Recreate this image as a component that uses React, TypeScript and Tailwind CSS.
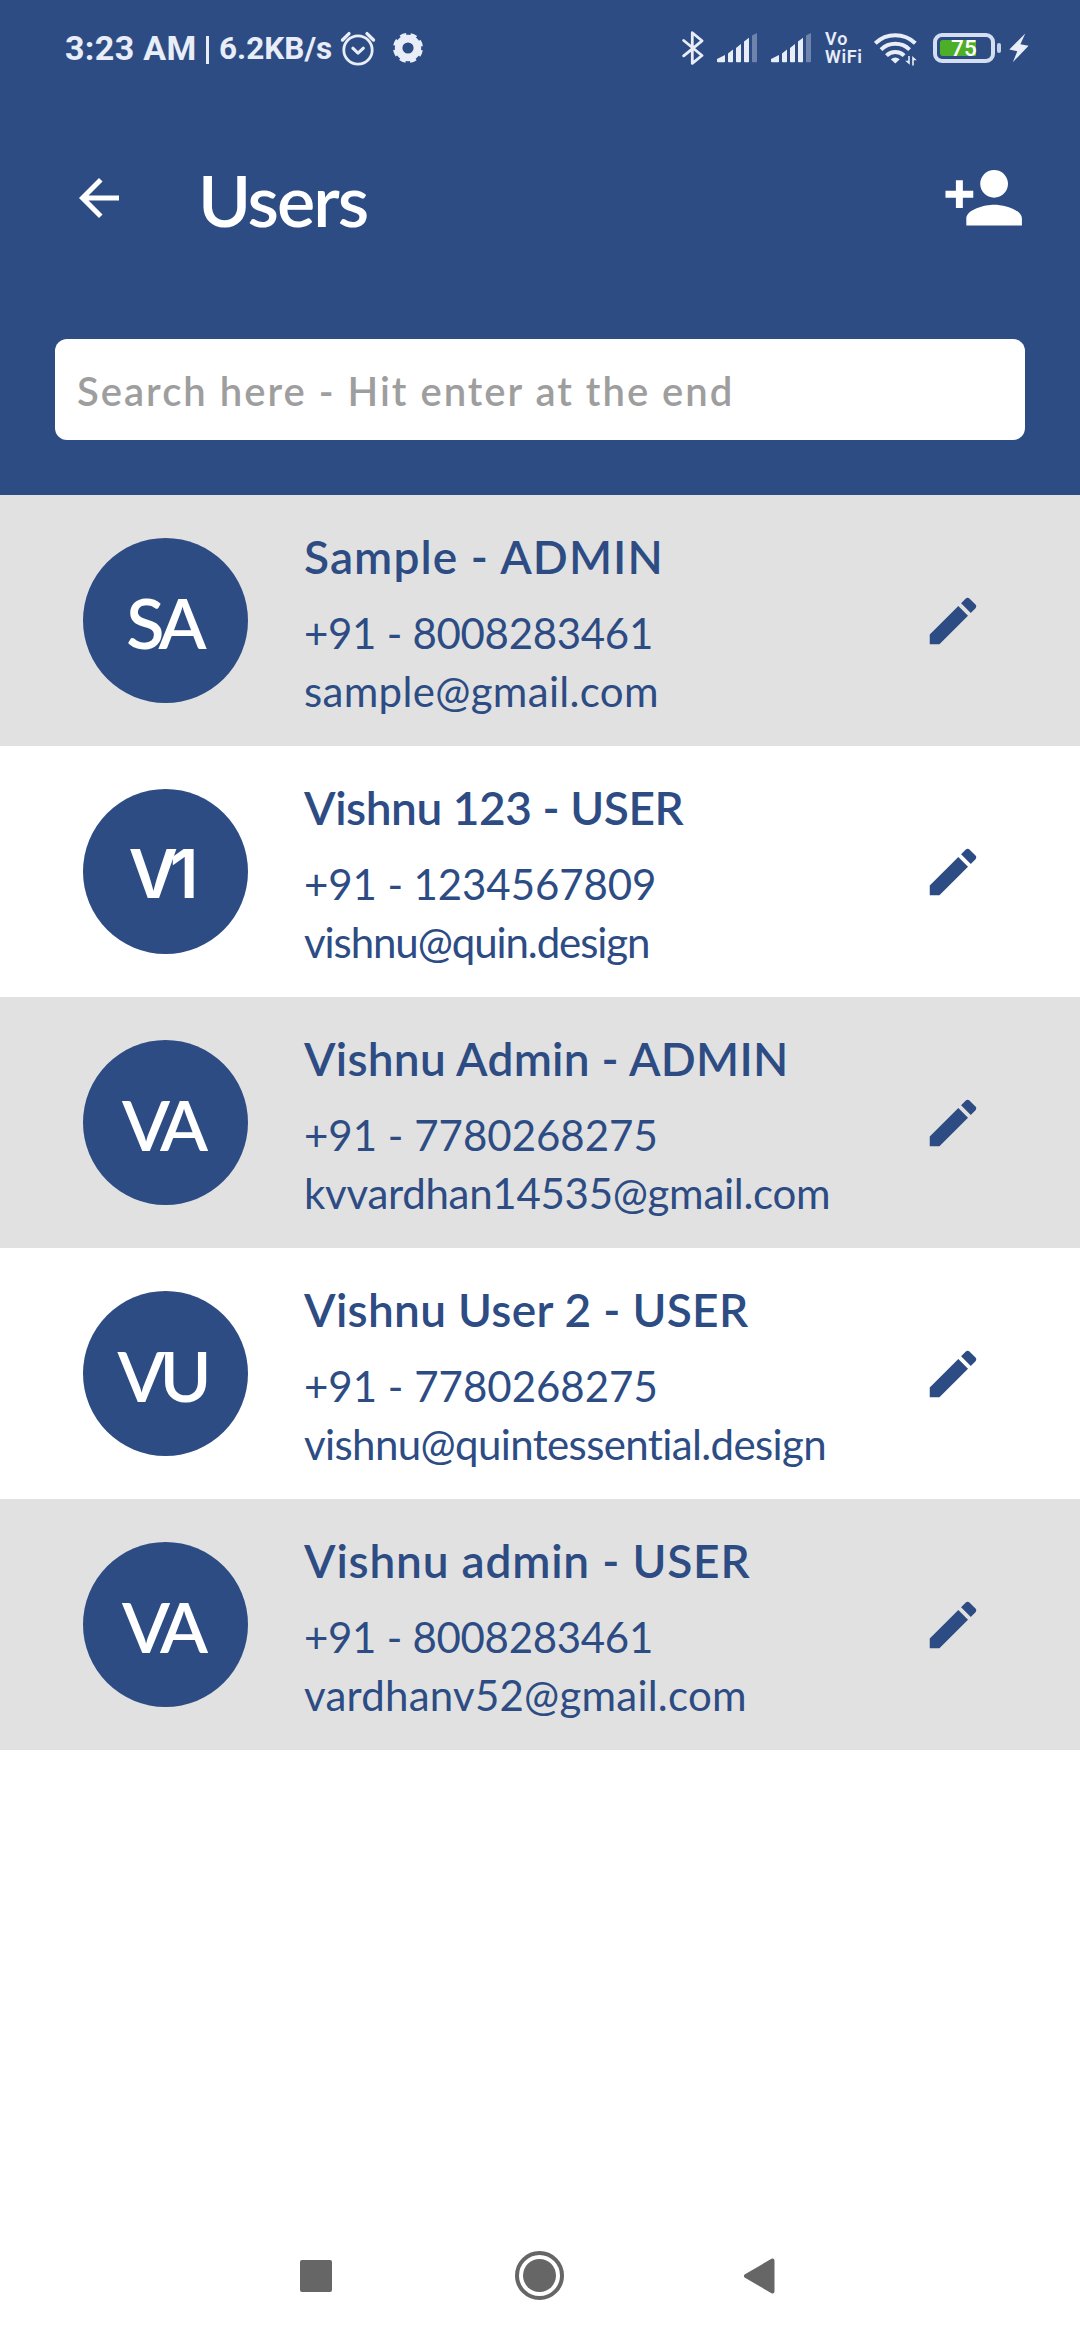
type User = {
  initials: string;
  initialsClass: string;
  name: string;
  nameClass: string;
  phone: string;
  phoneClass: string;
  email: string;
  emailClass: string;
};

const users: User[] = [
  {
    initials: "SA",
    initialsClass: "tracking-[-5px] mr-[3px]",
    name: "Sample - ADMIN",
    nameClass: "tracking-[1.11px]",
    phone: "+91 - 8008283461",
    phoneClass: "tracking-[-0.3px]",
    email: "sample@gmail.com",
    emailClass: "tracking-[0.33px]",
  },
  {
    initials: "V1",
    initialsClass: "font-['Inter',sans-serif] text-[68px] tracking-[-8px] mr-[12px]",
    name: "Vishnu 123 - USER",
    nameClass: "tracking-[-0.44px]",
    phone: "+91 - 1234567809",
    phoneClass: "tracking-[-0.1px]",
    email: "vishnu@quin.design",
    emailClass: "tracking-[-1.09px]",
  },
  {
    initials: "VA",
    initialsClass: "tracking-[-6px] mr-[7px]",
    name: "Vishnu Admin - ADMIN",
    nameClass: "tracking-[0.25px]",
    phone: "+91 - 7780268275",
    phoneClass: "tracking-normal",
    email: "kvvardhan14535@gmail.com",
    emailClass: "tracking-[-0.28px]",
  },
  {
    initials: "VU",
    initialsClass: "tracking-[-6px] mr-[8px]",
    name: "Vishnu User 2 - USER",
    nameClass: "tracking-[0.3px]",
    phone: "+91 - 7780268275",
    phoneClass: "tracking-normal",
    email: "vishnu@quintessential.design",
    emailClass: "tracking-[-0.62px]",
  },
  {
    initials: "VA",
    initialsClass: "tracking-[-6px] mr-[7px]",
    name: "Vishnu admin - USER",
    nameClass: "tracking-[0.8px]",
    phone: "+91 - 8008283461",
    phoneClass: "tracking-[-0.3px]",
    email: "vardhanv52@gmail.com",
    emailClass: "tracking-[0.23px]",
  },
];

function Alarm() {
  return (
    <svg viewBox="0 0 36 36" className="h-9 w-9 shrink-0" fill="none" stroke="currentColor" strokeLinecap="round" strokeLinejoin="round">
      <circle cx="18" cy="20" r="14.2" strokeWidth="2.8" />
      <path d="M2.5 10 9 3.6M33.5 10 27 3.6" strokeWidth="3.4" />
      <path d="M12.8 18.2l5.2 5 5.4-5" strokeWidth="3" />
    </svg>
  );
}

function Gear() {
  return (
    <svg viewBox="0 0 30 30" className="h-[30px] w-[30px] shrink-0">
      <g fill="none" stroke="currentColor">
        <circle cx="15" cy="15" r="9.4" strokeWidth="7.6" />
        <circle cx="15" cy="15" r="13.5" strokeWidth="3" strokeDasharray="6.2 4.403" strokeDashoffset="-2.2" />
      </g>
    </svg>
  );
}

function Bluetooth() {
  return (
    <svg viewBox="0 0 22 34" className="h-[34px] w-[22px] shrink-0" fill="none" stroke="currentColor" strokeWidth="2.8" strokeLinecap="round" strokeLinejoin="round">
      <path d="M1.7 9.5 20 24.5 10.3 32.3V1.7L20 9.8 1.7 24.8" />
    </svg>
  );
}

function Signal() {
  return (
    <svg viewBox="0 0 41 30" className="h-[30px] w-[41px] shrink-0" fill="currentColor">
      <path d="M0 26 8 22v6.8Q8 29.2 7 29.2H1Q0 29.2 0 28.2Z" />
      <path d="M11 20.5 16 16.5v12q0 .8-.8.8h-3.4q-.8 0-.8-.8Z" />
      <path d="M19 15 24 11v17.5q0 .8-.8.8h-3.4q-.8 0-.8-.8Z" />
      <path d="M27 8.5 32 4.8v23.7q0 .8-.8.8h-3.4q-.8 0-.8-.8Z" />
      <path d="M35 2.5 40 0v28.5q0 .8-.8.8h-3.4q-.8 0-.8-.8Z" opacity="0.35" />
    </svg>
  );
}

function Wifi() {
  return (
    <svg viewBox="0 0 44 33" className="h-[33px] w-[44px] shrink-0" fill="none" stroke="currentColor">
      <path d="M1.3 10.3a29 29 0 0 1 40 0" strokeWidth="4" />
      <path d="M7 16.6a20.5 20.5 0 0 1 28.6 0" strokeWidth="4" />
      <path d="M12.5 22.6a12.5 12.5 0 0 1 17.6 0" strokeWidth="4" />
      <path d="M16.8 26.2q4.5-3.4 9 0l-4.5 4.2z" fill="currentColor" stroke="none" />
      <path d="M35.8 23v8.8l-4.6-4h3v-4.8zM38.2 32.5V23l4.6 4.3h-3v5.2z" fill="currentColor" stroke="none" />
    </svg>
  );
}

function Battery() {
  return (
    <div className="flex shrink-0 items-center">
      <div className="flex h-[30px] w-[62px] items-center rounded-[9px] border-4 border-[#d5ddf0] pl-[3px]">
        <div className="flex h-4 w-9 items-center rounded-l-[3px] bg-[#4caf27] pl-[11px]">
          <span className="text-[22.5px] leading-none font-medium tracking-[0.3px] text-white">75</span>
        </div>
      </div>
      <div className="ml-[2px] h-[10px] w-1 rounded-[2px] bg-[#c6d0e6]" />
    </div>
  );
}

function StatusBar() {
  return (
    <div className="flex h-24 items-center pl-[65px] font-['Roboto',sans-serif] text-[#e8edf7]">
      <span className="w-[141px] shrink-0 text-[34px] leading-[40px] font-bold tracking-[0.35px] whitespace-nowrap">3:23 AM</span>
      <span className="mt-[3px] h-7 w-[3px] shrink-0 bg-current" />
      <span className="mt-[1px] ml-[10px] w-[121px] shrink-0 text-[31.5px] leading-[40px] font-bold whitespace-nowrap">6.2KB/s</span>
      <Alarm />
      <div className="ml-[17px] flex">
        <Gear />
      </div>
      <div className="ml-[259px] flex items-center">
        <Bluetooth />
        <div className="ml-[13px] flex gap-[13px]">
          <Signal />
          <Signal />
        </div>
        <div className="ml-[13px] flex w-[49px] flex-col text-[18px] leading-[18px] font-semibold">
          <span className="tracking-[1px]">Vo</span>
          <span className="tracking-[0.6px]">WiFi</span>
        </div>
        <div className="mt-[2px] flex">
          <Wifi />
        </div>
        <div className="ml-[15px] flex">
          <Battery />
        </div>
        <svg viewBox="0 0 20 30" className="ml-[8px] h-[30px] w-5 shrink-0" fill="currentColor">
          <path d="M16.3.5.3 16.5 8.3 18.2 3.8 29.3 19.6 12.8 11.4 11.2z" />
        </svg>
      </div>
    </div>
  );
}

function Header() {
  return (
    <header className="flex h-[495px] flex-col bg-[#2d4c84]">
      <StatusBar />
      <div className="flex h-[204px] items-center pl-[69px] text-white">
        <svg viewBox="0 0 24 24" className="h-[60px] w-[60px] shrink-0" fill="currentColor">
          <path d="M20 11H7.83l5.59-5.59L12 4l-8 8 8 8 1.41-1.41L7.83 13H20v-2z" />
        </svg>
        <h1 className="mt-[2px] ml-[69px] text-[72px] leading-[88px] font-semibold tracking-[-2px]">Users</h1>
        <svg viewBox="0 0 24 24" className="mr-[55px] ml-auto h-[83.4px] w-[83.4px] shrink-0" fill="currentColor">
          <path d="M15 12c2.21 0 4-1.79 4-4s-1.79-4-4-4-4 1.79-4 4 1.79 4 4 4zm-9-2V7H4v3H1v2h3v3h2v-3h3v-2H6zm9 4c-2.67 0-8 1.34-8 4v2h16v-2c0-2.66-5.33-4-8-4z" />
        </svg>
      </div>
      <div className="mx-[55px] mt-[39px] flex h-[101px] items-center rounded-xl bg-white pl-[22px]">
        <span className="mt-[3px] text-[40px] leading-[48px] font-semibold tracking-[2px] whitespace-nowrap text-[#9e9e9e]">
          Search here - Hit enter at the end
        </span>
      </div>
    </header>
  );
}

function UserRow({ user }: { user: User }) {
  return (
    <li className="flex h-[251px] pl-[83px] text-[#2d4c84] odd:bg-[#e1e1e1]">
      <div className="flex h-[165px] w-[165px] shrink-0 items-center justify-center self-center rounded-full bg-[#2d4c84] pt-[2px] text-[70px] leading-none font-semibold text-white">
        <span className={user.initialsClass}>{user.initials}</span>
      </div>
      <div className="ml-14 flex flex-col pt-[34px] whitespace-nowrap">
        <span className={`text-[46px] leading-[56px] font-semibold ${user.nameClass}`}>{user.name}</span>
        <span className={`mt-[19px] text-[42px] leading-[58px] ${user.phoneClass}`}>{user.phone}</span>
        <span className={`text-[42px] leading-[58px] ${user.emailClass}`}>{user.email}</span>
      </div>
      <svg viewBox="0 0 24 24" className="mr-24 ml-auto h-[62px] w-[62px] shrink-0 self-center" fill="currentColor">
        <path d="M3 17.25V21h3.75L17.81 9.94l-3.75-3.75L3 17.25zM20.71 7.04c.39-.39.39-1.02 0-1.41l-2.34-2.34c-.39-.39-1.02-.39-1.41 0l-1.83 1.83 3.75 3.75 1.83-1.83z" />
      </svg>
    </li>
  );
}

function NavigationBar() {
  return (
    <nav className="mt-auto flex h-[129px] items-center pl-[300px] text-[#666666]">
      <div className="h-8 w-8 rounded-[2px] bg-current" />
      <div className="ml-[183px] flex h-[49px] w-[49px] items-center justify-center rounded-full border-4 border-current">
        <div className="h-[33px] w-[33px] rounded-full bg-current" />
      </div>
      <svg viewBox="0 0 32 36" className="ml-[179px] h-9 w-8" fill="currentColor" stroke="currentColor" strokeWidth="4" strokeLinejoin="round">
        <path d="M3 18 29.500 2.500v31z" />
      </svg>
    </nav>
  );
}

export default function App() {
  return (
    <div className="flex h-[2340px] w-[1080px] flex-col overflow-hidden bg-white font-['Lato',sans-serif]">
      <Header />
      <ul>
        {users.map((user, index) => (
          <UserRow key={index} user={user} />
        ))}
      </ul>
      <NavigationBar />
    </div>
  );
}
